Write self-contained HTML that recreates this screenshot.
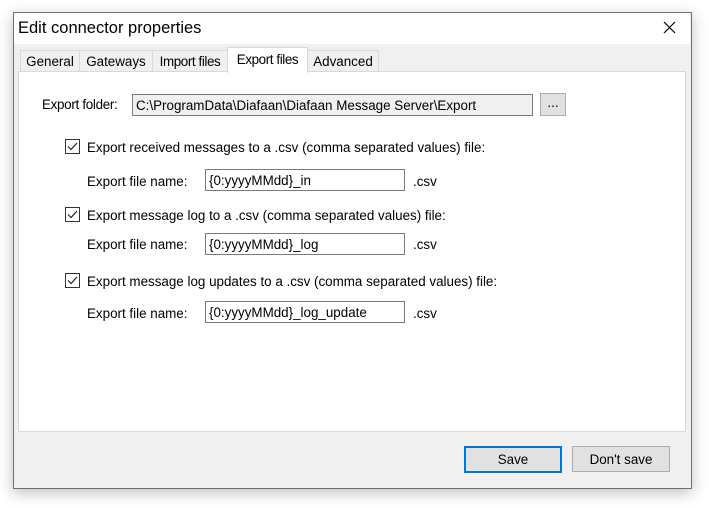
<!DOCTYPE html>
<html><head><style>
body{margin:0;width:709px;height:508px;background:#fff;position:relative;font-family:"Liberation Sans",sans-serif;font-size:13.4px;color:#000;overflow:hidden}
.a{position:absolute;white-space:nowrap}
.win{position:absolute;left:13px;top:12px;width:677px;height:475px;border:1px solid #707070;background:#f0f0f0;box-shadow:0 4px 14px rgba(0,0,0,.25)}
.tb{position:absolute;background:#fff;border:1px solid #7a7a7a;height:20px;line-height:21px;padding-left:3px;box-sizing:content-box}
.tab{position:absolute;top:50px;height:20px;line-height:21px;background:#f0f0f0;border:1px solid #d9d9d9;border-bottom:none;text-align:center}
.cb{position:absolute;width:13px;height:13px;border:1px solid #333;background:#fff}
.btn{position:absolute;height:24px;line-height:25px;text-align:center;background:#e1e1e1;border:1px solid #adadad}
</style></head><body>
<div class="win"></div>
<div class="a" style="left:14px;top:13px;width:676px;height:31px;background:#fff"></div>
<div class="a" style="left:18px;top:19px;font-size:16.5px">Edit connector properties</div>
<svg class="a" style="left:663px;top:21px" width="13" height="13"><path d="M1 1L12 12M12 1L1 12" stroke="#000" stroke-width="1.2"/></svg>
<div class="a" style="left:18px;top:71px;width:666px;height:359px;background:#fff;border:1px solid #d9d9d9"></div>
<div class="tab" style="left:20px;width:58px">General</div>
<div class="tab" style="left:79px;width:72px">Gateways</div>
<div class="tab" style="left:152px;width:74px;letter-spacing:-0.4px">Import files</div>
<div class="tab" style="left:227px;top:47px;height:25px;width:79px;background:#fff;border-color:#d9d9d9;line-height:24px;letter-spacing:-0.4px">Export files</div>
<div class="tab" style="left:307px;width:70px">Advanced</div>
<div class="a" style="left:42px;top:97px;letter-spacing:-0.3px">Export folder:</div>
<div class="tb" style="left:132px;top:94px;width:396px;background:#f0f0f0">C:\ProgramData\Diafaan\Diafaan Message Server\Export</div>
<div class="btn" style="left:540px;top:93px;width:24px;height:21px;line-height:18px">...</div>

<div class="cb" style="left:65px;top:139px"></div>
<svg class="a" style="left:65px;top:139px" width="15" height="15"><path d="M3 7.5L6 10.5L12 4" fill="none" stroke="#222" stroke-width="1.2"/></svg>
<div class="a" style="left:87px;top:140px">Export received messages to a .csv (comma separated values) file:</div>
<div class="a" style="left:87px;top:174px">Export file name:</div>
<div class="tb" style="left:205px;top:169px;width:195px">{0:yyyyMMdd}_in</div>
<div class="a" style="left:413px;top:174px">.csv</div>

<div class="cb" style="left:65px;top:207px"></div>
<svg class="a" style="left:65px;top:207px" width="15" height="15"><path d="M3 7.5L6 10.5L12 4" fill="none" stroke="#222" stroke-width="1.2"/></svg>
<div class="a" style="left:87px;top:208px">Export message log to a .csv (comma separated values) file:</div>
<div class="a" style="left:87px;top:237px">Export file name:</div>
<div class="tb" style="left:205px;top:233px;width:195px">{0:yyyyMMdd}_log</div>
<div class="a" style="left:413px;top:237px">.csv</div>

<div class="cb" style="left:65px;top:273px"></div>
<svg class="a" style="left:65px;top:273px" width="15" height="15"><path d="M3 7.5L6 10.5L12 4" fill="none" stroke="#222" stroke-width="1.2"/></svg>
<div class="a" style="left:87px;top:274px">Export message log updates to a .csv (comma separated values) file:</div>
<div class="a" style="left:87px;top:306px">Export file name:</div>
<div class="tb" style="left:205px;top:301px;width:195px">{0:yyyyMMdd}_log_update</div>
<div class="a" style="left:413px;top:306px">.csv</div>

<div class="btn" style="left:464px;top:446px;width:94px;height:23px;border:2px solid #0078d7;line-height:24px">Save</div>
<div class="btn" style="left:572px;top:446px;width:96px">Don't save</div>
</body></html>
